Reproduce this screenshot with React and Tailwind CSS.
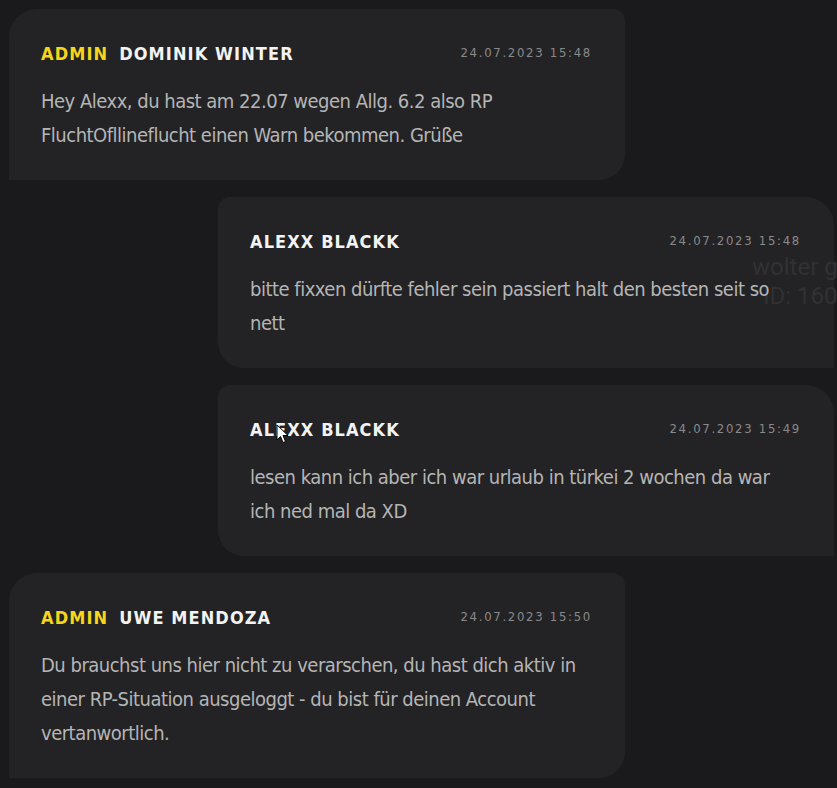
import React from 'react';

const messages = [
    {
        id: 1,
        admin: true,
        name: 'Dominik Winter',
        time: '24.07.2023 15:48',
        text: 'Hey Alexx, du hast am 22.07 wegen Allg. 6.2 also RP FluchtOfllineflucht einen Warn bekommen. Grüße'
    },
    {
        id: 2,
        admin: false,
        name: 'Alexx Blackk',
        time: '24.07.2023 15:48',
        text: 'bitte fixxen dürfte fehler sein passiert halt den besten seit so nett'
    },
    {
        id: 3,
        admin: false,
        name: 'Alexx Blackk',
        time: '24.07.2023 15:49',
        text: 'lesen kann ich aber ich war urlaub in türkei 2 wochen da war ich ned mal da XD'
    },
    {
        id: 4,
        admin: true,
        name: 'Uwe Mendoza',
        time: '24.07.2023 15:50',
        text: 'Du brauchst uns hier nicht zu verarschen, du hast dich aktiv in einer RP-Situation ausgeloggt - du bist für deinen Account vertanwortlich.'
    }
];

const narrow = { fontFamily: '"DejaVu Sans Condensed", "DejaVu Sans", sans-serif', fontStretch: 'condensed' };

const Cursor = () => (
    <svg width="14" height="20" viewBox="0 0 14 20" className="absolute left-[276px] top-[424px] z-20">
        <path d="M1 1 L1 16 L4.5 12.5 L7 18.5 L9.5 17.5 L7 11.5 L12 11.5 Z" fill="#fff" stroke="#000" strokeWidth="1" />
    </svg>
);

// bubble itself stays non-positioned so the faint overlay sits between its background and its text
const Bubble = ({ msg }) => (
    <div
        className={`w-[616px] bg-[#232325] pl-[32px] pr-[33px] pt-[30px] pb-[28px] ${
            msg.admin
                ? 'self-start rounded-tl-[28px] rounded-tr-[12px] rounded-br-[26px] rounded-bl-none'
                : 'self-end rounded-tl-[12px] rounded-tr-[28px] rounded-bl-[26px] rounded-br-none'
        }`}
    >
        <div className="relative z-10 flex items-center justify-between h-[28px]">
            <div className="flex items-center gap-[11px] text-[18px] font-bold tracking-[1.1px] uppercase" style={narrow}>
                {msg.admin && <span className="text-[#f7d51b]">Admin</span>}
                <span className="text-[#f3f3f3]">{msg.name}</span>
            </div>
            <span className="text-[13px] tracking-[1.7px] text-[#8a8a8a]" style={narrow}>{msg.time}</span>
        </div>
        <p className="relative z-10 mt-[17px] pr-[4px] text-[20px] leading-[34px] tracking-[-0.5px] text-[#b5b5b5]" style={narrow}>{msg.text}</p>
    </div>
);

export default function App() {
    return (
        <div className="relative min-h-[788px] overflow-hidden bg-[#1a1a1c]">
            <div className="flex flex-col gap-[17px] pl-[9px] pr-[3px] pt-[9px]">
                {messages.map(msg => (
                    <Bubble key={msg.id} msg={msg} />
                ))}
            </div>
            <div className="pointer-events-none absolute left-[752px] top-[253px] z-[5] whitespace-nowrap text-[24px] leading-[29px] text-[#313133]" style={{ fontFamily: 'Roboto, sans-serif' }}>
                <div>wolter g</div>
                <div className="pl-[11px]">ID: 160</div>
            </div>
            <Cursor />
        </div>
    );
}
